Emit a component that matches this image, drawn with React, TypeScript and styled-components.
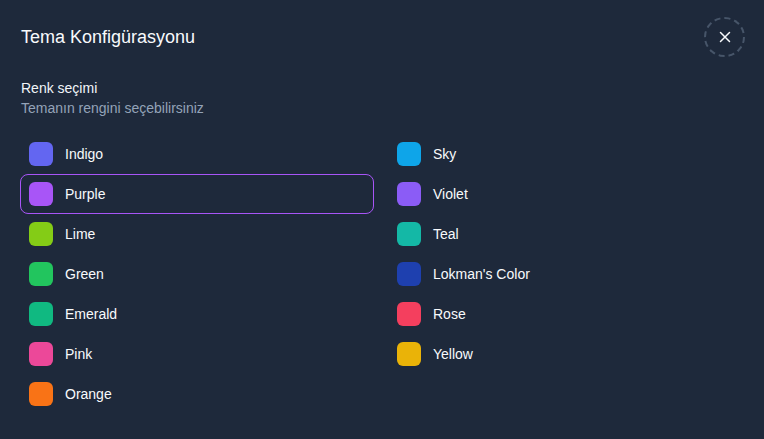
import React, { useState } from 'react';
import styled, { createGlobalStyle } from 'styled-components';

interface ThemeColor {
    id: string;
    label: string;
    hex: string;
}

const COLORS: ThemeColor[] = [
    { id: 'indigo', label: 'Indigo', hex: '#6366f1' },
    { id: 'sky', label: 'Sky', hex: '#0ea5e9' },
    { id: 'purple', label: 'Purple', hex: '#a855f7' },
    { id: 'violet', label: 'Violet', hex: '#8b5cf6' },
    { id: 'lime', label: 'Lime', hex: '#84cc16' },
    { id: 'teal', label: 'Teal', hex: '#14b8a6' },
    { id: 'green', label: 'Green', hex: '#22c55e' },
    { id: 'lokman', label: "Lokman's Color", hex: '#1e40af' },
    { id: 'emerald', label: 'Emerald', hex: '#10b981' },
    { id: 'rose', label: 'Rose', hex: '#f43f5e' },
    { id: 'pink', label: 'Pink', hex: '#ec4899' },
    { id: 'yellow', label: 'Yellow', hex: '#eab308' },
    { id: 'orange', label: 'Orange', hex: '#f97316' },
];

const App: React.FC = () => {
    const [selected, setSelected] = useState('purple');

    return (
        <>
            <GlobalStyle />
            <Panel>
                <Header>
                    <Title>Tema Konfigürasyonu</Title>
                    <CloseButton aria-label="Kapat">
                        <svg width="12" height="12" viewBox="0 0 12 12" fill="none">
                            <path d="M1.5 1.5l9 9M10.5 1.5l-9 9" stroke="#f8fafc" strokeWidth="1.5" strokeLinecap="round" />
                        </svg>
                    </CloseButton>
                </Header>

                <Section>
                    <SectionTitle>Renk seçimi</SectionTitle>
                    <SectionHint>Temanın rengini seçebilirsiniz</SectionHint>
                </Section>

                <ColorGrid>
                    {COLORS.map(color => (
                        <ColorOption
                            key={color.id}
                            $active={selected === color.id}
                            onClick={() => setSelected(color.id)}
                        >
                            <Swatch $color={color.hex} />
                            <ColorLabel>{color.label}</ColorLabel>
                        </ColorOption>
                    ))}
                </ColorGrid>
            </Panel>
        </>
    );
};

// Styled Components
const GlobalStyle = createGlobalStyle`
    html, body {
        margin: 0;
        padding: 0;
        background: #1e293b;
    }
    * {
        box-sizing: border-box;
    }
`;

const Panel = styled.div`
    width: 764px;
    height: 439px;
    padding: 17px 19px 0 20px;
    background: #1e293b;
    font-family: 'Liberation Sans', Arial, sans-serif;
    color: #f8fafc;
`;

const Header = styled.header`
    display: flex;
    justify-content: space-between;
    align-items: center;
    height: 40px;
`;

const Title = styled.h2`
    margin: 0 0 0 1px;
    font-size: 18px;
    font-weight: 500;
    color: #f8fafc;
`;

const CloseButton = styled.button`
    width: 41px;
    height: 40px;
    display: flex;
    align-items: center;
    justify-content: center;
    padding: 0;
    background: transparent;
    border: 2px dashed #475569;
    border-radius: 50%;
    cursor: pointer;
`;

const Section = styled.div`
    margin-top: 21px;
    padding-left: 1px;
`;

const SectionTitle = styled.div`
    font-size: 14px;
    line-height: 20px;
    color: #f1f5f9;
`;

const SectionHint = styled.div`
    font-size: 14px;
    line-height: 20px;
    color: #94a3b8;
`;

const ColorGrid = styled.div`
    display: grid;
    grid-template-columns: 354px 354px;
    column-gap: 14px;
    margin-top: 16px;
`;

const ColorOption = styled.div<{ $active: boolean }>`
    display: flex;
    align-items: center;
    gap: 12px;
    height: 40px;
    padding: 0 8px;
    border: 1px solid ${props => (props.$active ? '#a855f7' : 'transparent')};
    border-radius: 8px;
    cursor: pointer;
`;

const Swatch = styled.span<{ $color: string }>`
    width: 24px;
    height: 24px;
    flex-shrink: 0;
    border-radius: 6px;
    background: ${props => props.$color};
`;

const ColorLabel = styled.span`
    font-size: 14px;
    font-weight: 500;
    color: #f8fafc;
`;

export default App;
